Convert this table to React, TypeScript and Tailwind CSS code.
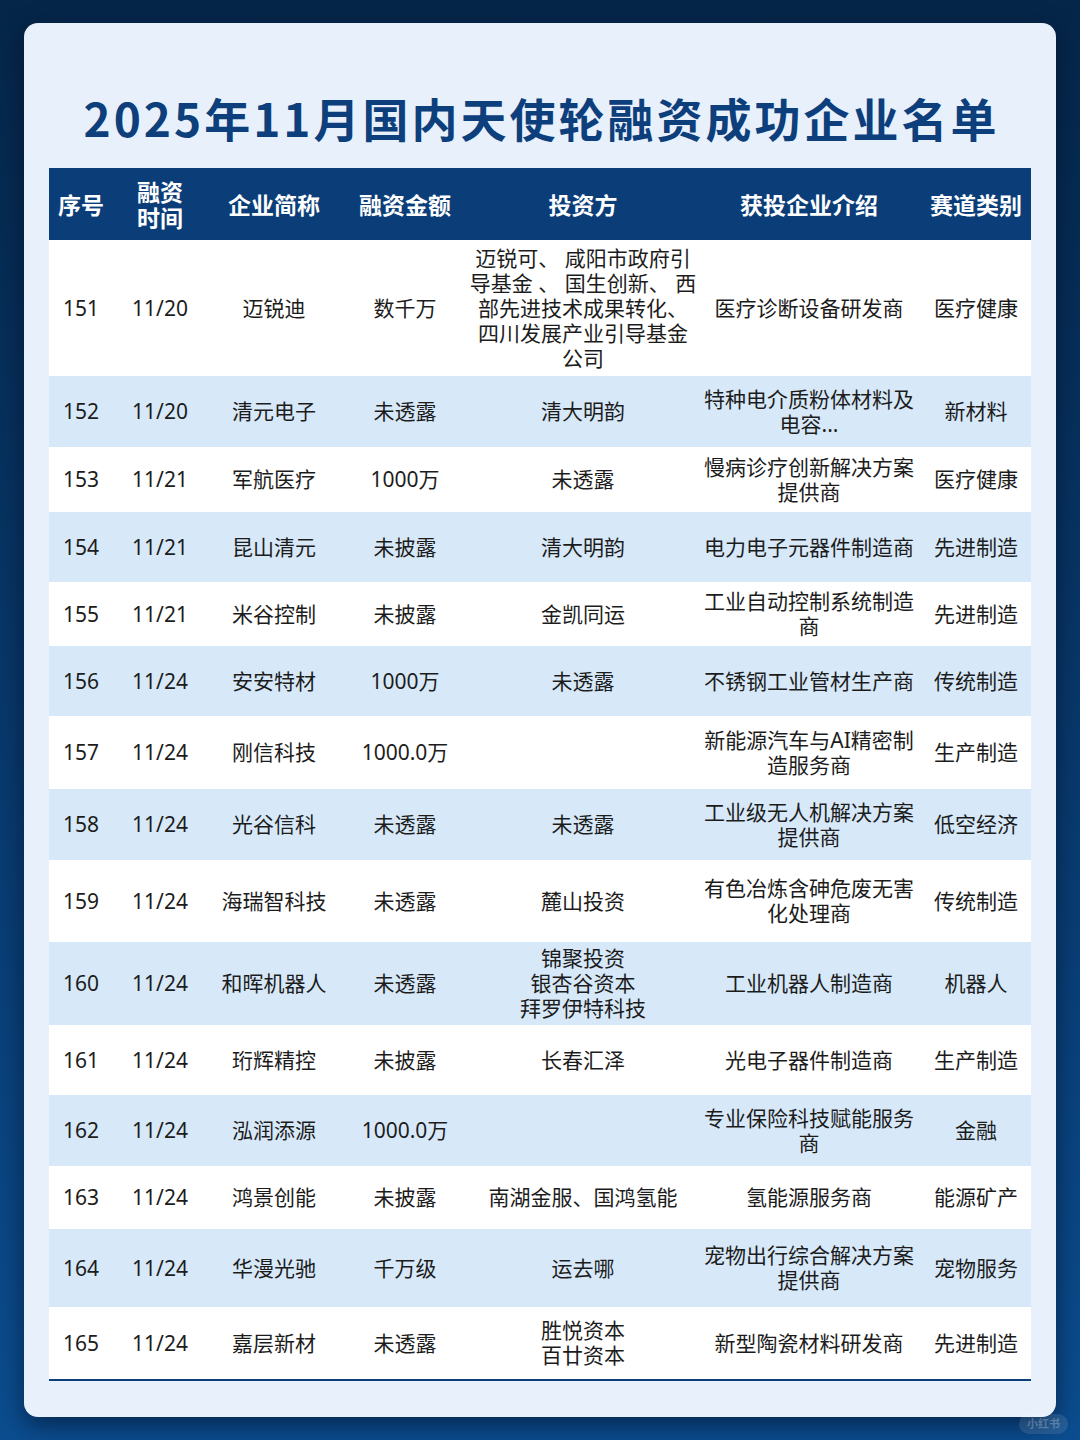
import React from 'react'

type Row = {
  no: string
  date: string
  name: string
  amount: string
  investor: string[]
  intro: string[]
  track: string
  h: number
}

const rows: Row[] = [
  {
    no: '151', date: '11/20', name: '迈锐迪', amount: '数千万',
    investor: ['迈锐可、 咸阳市政府引', '导基金 、 国生创新、 西', '部先进技术成果转化、', '四川发展产业引导基金', '公司'],
    intro: ['医疗诊断设备研发商'], track: '医疗健康', h: 136,
  },
  { no: '152', date: '11/20', name: '清元电子', amount: '未透露', investor: ['清大明韵'], intro: ['特种电介质粉体材料及', '电容...'], track: '新材料', h: 71 },
  { no: '153', date: '11/21', name: '军航医疗', amount: '1000万', investor: ['未透露'], intro: ['慢病诊疗创新解决方案', '提供商'], track: '医疗健康', h: 65 },
  { no: '154', date: '11/21', name: '昆山清元', amount: '未披露', investor: ['清大明韵'], intro: ['电力电子元器件制造商'], track: '先进制造', h: 70 },
  { no: '155', date: '11/21', name: '米谷控制', amount: '未披露', investor: ['金凯同运'], intro: ['工业自动控制系统制造', '商'], track: '先进制造', h: 64 },
  { no: '156', date: '11/24', name: '安安特材', amount: '1000万', investor: ['未透露'], intro: ['不锈钢工业管材生产商'], track: '传统制造', h: 70 },
  { no: '157', date: '11/24', name: '刚信科技', amount: '1000.0万', investor: [], intro: ['新能源汽车与AI精密制', '造服务商'], track: '生产制造', h: 73 },
  { no: '158', date: '11/24', name: '光谷信科', amount: '未透露', investor: ['未透露'], intro: ['工业级无人机解决方案', '提供商'], track: '低空经济', h: 71 },
  { no: '159', date: '11/24', name: '海瑞智科技', amount: '未透露', investor: ['麓山投资'], intro: ['有色冶炼含砷危废无害', '化处理商'], track: '传统制造', h: 82 },
  { no: '160', date: '11/24', name: '和晖机器人', amount: '未透露', investor: ['锦聚投资', '银杏谷资本', '拜罗伊特科技'], intro: ['工业机器人制造商'], track: '机器人', h: 83 },
  { no: '161', date: '11/24', name: '珩辉精控', amount: '未披露', investor: ['长春汇泽'], intro: ['光电子器件制造商'], track: '生产制造', h: 70 },
  { no: '162', date: '11/24', name: '泓润添源', amount: '1000.0万', investor: [], intro: ['专业保险科技赋能服务', '商'], track: '金融', h: 71 },
  { no: '163', date: '11/24', name: '鸿景创能', amount: '未披露', investor: ['南湖金服、国鸿氢能'], intro: ['氢能源服务商'], track: '能源矿产', h: 63 },
  { no: '164', date: '11/24', name: '华漫光驰', amount: '千万级', investor: ['运去哪'], intro: ['宠物出行综合解决方案', '提供商'], track: '宠物服务', h: 78 },
  { no: '165', date: '11/24', name: '嘉层新材', amount: '未透露', investor: ['胜悦资本', '百廿资本'], intro: ['新型陶瓷材料研发商'], track: '先进制造', h: 72 },
]

const cols = 'grid grid-cols-[64px_94px_134px_128px_228px_224px_110px]'

function Lines({ lines }: { lines: string[] }) {
  return (
    <div className="flex flex-col items-center text-center">
      {lines.map((l, i) => (
        <span key={i} className="block whitespace-pre">{l}</span>
      ))}
    </div>
  )
}

export default function App() {
  return (
    <div
      className="relative w-[1080px] h-[1440px] bg-gradient-to-b from-[#052649] via-[#08386b] to-[#0b4d8f] pt-[23px] px-[24px]"
      style={{ fontFamily: '"Noto Sans", "Noto Sans CJK SC", sans-serif' }}
    >
      <div className="w-[1032px] h-[1394px] rounded-[14px] bg-[#e8f0fb] shadow-[0_8px_24px_rgba(0,10,30,0.55)] pt-[66px] px-[25px]">
        <h1
          className="pl-[3px] text-center text-[46px] leading-[56px] font-bold tracking-[3px] text-[#0c3f7b]"
          style={{ fontFamily: '"Noto Sans CJK SC", sans-serif' }}
        >
          2025年11月国内天使轮融资成功企业名单
        </h1>

        <div className="mt-[23px] border-b-2 border-[#0c3f7b]">
          {/* header */}
          <div
            className={`${cols} h-[72px] bg-[#0b3e78] text-white text-[23px] font-bold leading-[26px]`}
            style={{ fontFamily: '"Noto Sans CJK SC", sans-serif' }}
          >
            <div className="flex items-center justify-center">序号</div>
            <div className="flex items-center justify-center">
              <Lines lines={['融资', '时间']} />
            </div>
            <div className="flex items-center justify-center">企业简称</div>
            <div className="flex items-center justify-center">融资金额</div>
            <div className="flex items-center justify-center">投资方</div>
            <div className="flex items-center justify-center">获投企业介绍</div>
            <div className="flex items-center justify-center">赛道类别</div>
          </div>

          {rows.map((r, i) => (
            <div
              key={r.no}
              className={`${cols} text-[21px] leading-[25px] text-[#1c1c1c] ${i % 2 === 1 ? 'bg-[#d7e9f9]' : 'bg-white'}`}
              style={{ height: r.h }}
            >
              <div className="flex items-center justify-center">{r.no}</div>
              <div className="flex items-center justify-center">{r.date}</div>
              <div className="flex items-center justify-center">{r.name}</div>
              <div className="flex items-center justify-center">{r.amount}</div>
              <div className="flex items-center justify-center">
                <Lines lines={r.investor} />
              </div>
              <div className="flex items-center justify-center">
                <Lines lines={r.intro} />
              </div>
              <div className="flex items-center justify-center">{r.track}</div>
            </div>
          ))}
        </div>
      </div>

      <div className="absolute right-[12px] bottom-[6px] rounded-full bg-white/10 px-[8px] py-[2px] text-[11px] font-bold text-white/25">
        小红书
      </div>
    </div>
  )
}
